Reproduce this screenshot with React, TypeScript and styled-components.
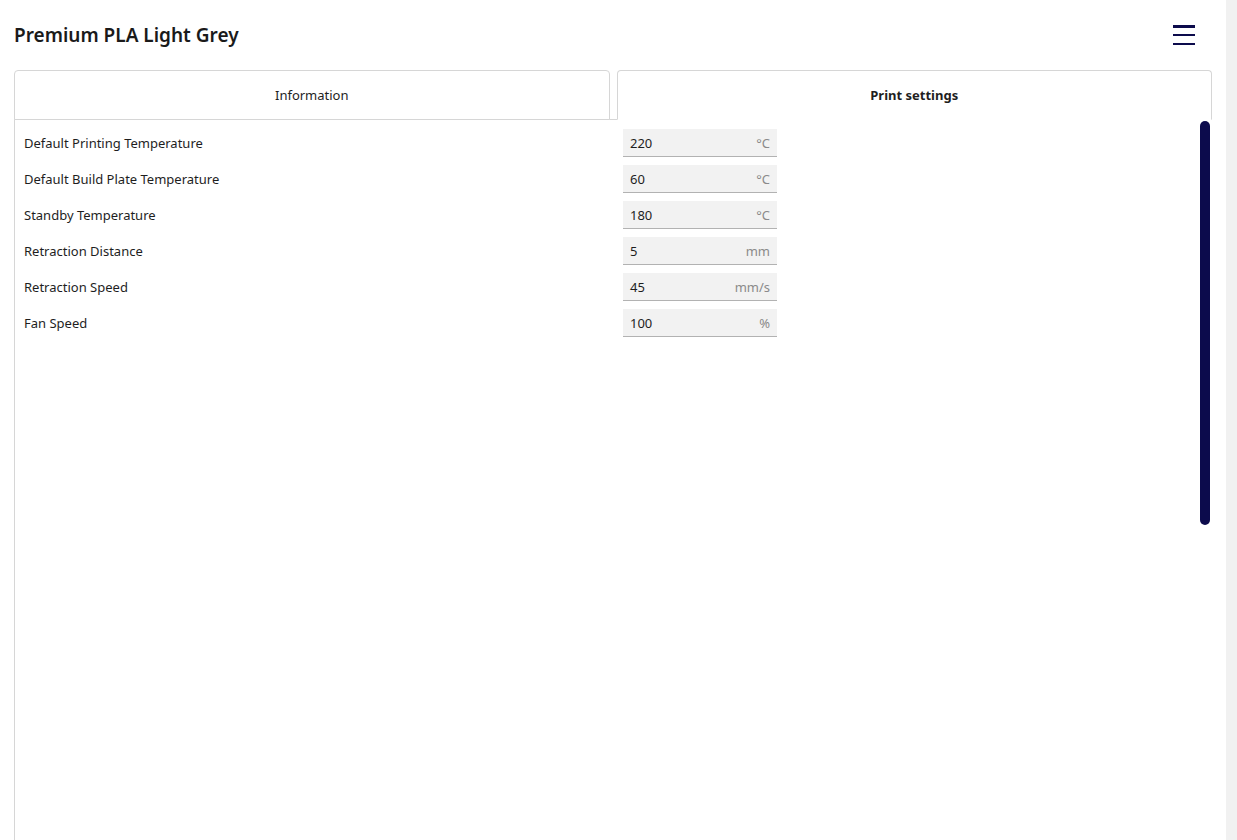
import React from "react";
import styled, { createGlobalStyle } from "styled-components";

const Global = createGlobalStyle`
  html, body { margin: 0; padding: 0; height: 100%; background: #ffffff; }
  #root { height: 100%; }
  * { box-sizing: border-box; }
  body { font-family: "Noto Sans", "Open Sans", sans-serif; color: #1e1e1e; overflow: hidden; }
`;

const Page = styled.div`
  display: flex;
  height: 840px;
  width: 1237px;
`;

const Main = styled.div`
  flex: 1;
  display: flex;
  flex-direction: column;
  padding: 0 14px;
  min-width: 0;
`;

const Track = styled.div`
  width: 11px;
  background: #f1f1f1;
`;

const Header = styled.header`
  height: 70px;
  display: flex;
  align-items: center;
  justify-content: space-between;
`;

const Title = styled.h1`
  margin: 0;
  font-size: 19px;
  font-weight: 600;
  color: #1a1a1a;
  letter-spacing: 0;
`;

const MenuButton = styled.button`
  border: 0;
  background: none;
  padding: 0;
  margin-right: 17px;
  width: 22px;
  height: 20px;
  display: flex;
  flex-direction: column;
  justify-content: space-between;
  cursor: pointer;
`;

const MenuBar = styled.span`
  display: block;
  height: 2.5px;
  background: #0c0b4c;
`;

const TabBar = styled.div`
  display: flex;
  gap: 7px;
  border-bottom: 1px solid #d6d6d6;
`;

const Tab = styled.div<{ $active?: boolean }>`
  flex: 1;
  height: 50px;
  margin-bottom: -1px;
  display: flex;
  align-items: center;
  justify-content: center;
  border: 1px solid #d6d6d6;
  border-bottom-color: ${(p) => (p.$active ? "#ffffff" : "#d6d6d6")};
  border-radius: 4px 4px 0 0;
  background: #ffffff;
  font-size: 13px;
  font-weight: ${(p) => (p.$active ? 700 : 400)};
  color: #1e1e1e;
`;

const Panel = styled.div`
  position: relative;
  flex: 1;
  border-left: 1px solid #d6d6d6;
  padding: 9px 0 0 9px;
  display: flex;
  flex-direction: column;
  gap: 8px;
`;

const Row = styled.div`
  display: grid;
  grid-template-columns: 599px 154px;
  align-items: center;
`;

const Label = styled.span`
  font-size: 13px;
  color: #1e1e1e;
`;

const Field = styled.div`
  height: 28px;
  background: #f2f2f2;
  border-bottom: 1px solid #b2b2b2;
  display: flex;
  align-items: center;
  justify-content: space-between;
  padding: 0 7px;
  font-size: 13px;
`;

const Value = styled.span`
  color: #1e1e1e;
`;

const Unit = styled.span`
  color: #8a8a8a;
`;

const Thumb = styled.div`
  position: absolute;
  top: 1px;
  right: 2px;
  width: 10px;
  height: 404px;
  border-radius: 5px;
  background: #0c0b4c;
`;

const settings = [
  { label: "Default Printing Temperature", value: "220", unit: "°C" },
  { label: "Default Build Plate Temperature", value: "60", unit: "°C" },
  { label: "Standby Temperature", value: "180", unit: "°C" },
  { label: "Retraction Distance", value: "5", unit: "mm" },
  { label: "Retraction Speed", value: "45", unit: "mm/s" },
  { label: "Fan Speed", value: "100", unit: "%" },
];

export default function App() {
  return (
    <>
      <Global />
      <Page>
        <Main>
          <Header>
            <Title>Premium PLA Light Grey</Title>
            <MenuButton aria-label="Menu">
              <MenuBar />
              <MenuBar />
              <MenuBar />
            </MenuButton>
          </Header>
          <TabBar>
            <Tab>Information</Tab>
            <Tab $active>Print settings</Tab>
          </TabBar>
          <Panel>
            {settings.map((s) => (
              <Row key={s.label}>
                <Label>{s.label}</Label>
                <Field>
                  <Value>{s.value}</Value>
                  <Unit>{s.unit}</Unit>
                </Field>
              </Row>
            ))}
            <Thumb />
          </Panel>
        </Main>
        <Track />
      </Page>
    </>
  );
}
